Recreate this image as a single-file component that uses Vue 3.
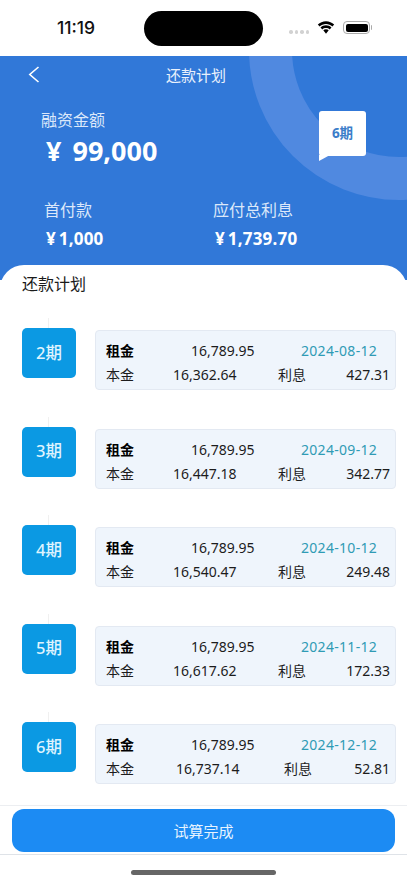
<script setup>
const rows = [
  { n: '2期', date: '2024-08-12', p: '16,362.64', i: '利息', v: '427.31' },
  { n: '3期', date: '2024-09-12', p: '16,447.18', i: '利息', v: '342.77' },
  { n: '4期', date: '2024-10-12', p: '16,540.47', i: '利息', v: '249.48' },
  { n: '5期', date: '2024-11-12', p: '16,617.62', i: '利息', v: '172.33' },
  { n: '6期', date: '2024-12-12', p: '16,737.14', i: '利息', v: '52.81', short: true }
]
</script>

<template>
  <div class="page">
    <div class="status">
      <span class="time">11:19</span>
      <div class="island"></div>
      <div class="status-right">
        <span class="dots"><i></i><i></i><i></i><i></i></span>
        <svg class="wifi" width="18" height="13" viewBox="0 0 18 13">
          <path d="M9 3c2.500 0 4.700 1 6.400 2.500l1.800-1.900C15.100 1.600 12.200.3 9 .3S2.900 1.600.8 3.600l1.800 1.900C4.300 4 6.500 3 9 3z" fill="#000"/>
          <path d="M9 7c1.400 0 2.700.5 3.700 1.400l1.800-1.900C13 5.100 11.100 4.300 9 4.300s-4 .8-5.500 2.200l1.800 1.900C6.300 7.500 7.600 7 9 7z" fill="#000"/>
          <path d="M9 8.300c-1.100 0-2 .4-2.700 1L9 12.700l2.700-3.400c-.7-.6-1.600-1-2.700-1z" fill="#000"/>
        </svg>
        <span class="battery"><b></b></span>
      </div>
    </div>

    <div class="hero">
      <div class="ring"></div>
      <div class="nav">
        <svg class="back" width="12" height="17" viewBox="0 0 12 17">
          <path d="M10.500 1 1.800 8.500l8.700 7.500" fill="none" stroke="#fff" stroke-width="1.600"/>
        </svg>
        <span class="nav-title">还款计划</span>
      </div>
      <div class="amount-block">
        <div class="amount-label">融资金额</div>
        <div class="amount">¥ 99,000</div>
      </div>
      <div class="tag">6期</div>
      <div class="stats">
        <div class="stat first">
          <div class="stat-label">首付款</div>
          <div class="stat-value">¥<span>1,000</span></div>
        </div>
        <div class="stat">
          <div class="stat-label">应付总利息</div>
          <div class="stat-value">¥<span>1,739.70</span></div>
        </div>
      </div>
    </div>

    <div class="sheet">
      <div class="sheet-title">还款计划</div>
      <div class="list">
        <div v-for="r in rows" :key="r.n" class="row">
          <div class="period">
            <span class="tick"></span>
            <div class="badge">{{ r.n }}</div>
          </div>
          <div class="card">
            <div class="line">
              <b class="k">租金</b>
              <span class="rent">16,789.95</span>
              <span class="date">{{ r.date }}</span>
            </div>
            <div class="line">
              <span class="k">本金</span>
              <span class="principal" :class="{ short: r.short }">{{ r.p }}</span>
              <span class="ik" :class="{ short: r.short }">{{ r.i }}</span>
              <span class="iv">{{ r.v }}</span>
            </div>
          </div>
        </div>
      </div>
    </div>

    <div class="footer">
      <button class="cta">试算完成</button>
    </div>
    <div class="home"><span></span></div>
  </div>
</template>

<style scoped>
.page {
  width: 407px;
  height: 883px;
  overflow: hidden;
  position: relative;
  background: #fff;
  display: flex;
  flex-direction: column;
  font-family: "Noto Sans", "Noto Sans CJK SC", sans-serif;
  color: #111;
}
.status {
  height: 56px;
  flex: none;
  display: flex;
  align-items: center;
  position: relative;
  background: #fff;
}
.time {
  margin-left: 57px;
  font: 500 17.500px Inter, sans-serif;
  color: #111;
  margin-top: -1px;
}
.island {
  position: absolute;
  left: 144px;
  top: 11px;
  width: 119px;
  height: 35px;
  border-radius: 18px;
  background: #000;
}
.status-right {
  position: absolute;
  left: 289px;
  top: 21px;
  display: flex;
  align-items: center;
}
.dots { display: flex; gap: 2px; margin-top: 9px; }
.dots i { width: 3.500px; height: 3.500px; border-radius: 50%; background: #d2d2d2; }
.wifi { margin-left: 8px; }
.battery {
  margin-left: 8px;
  width: 27px;
  height: 13px;
  border: 1px solid #aaa;
  border-radius: 4px;
  padding: 1.500px;
  box-sizing: border-box;
  display: flex;
  position: relative;
}
.battery::after {
  content: "";
  position: absolute;
  right: -3px;
  top: 3px;
  width: 1.500px;
  height: 5px;
  background: #aaa;
  border-radius: 0 1px 1px 0;
}
.battery b { flex: 1; background: #000; border-radius: 2px; }
.hero {
  height: 224px;
  flex: none;
  background: #3178d8;
  position: relative;
  overflow: hidden;
  color: #fff;
}
.ring {
  position: absolute;
  left: 249px;
  top: -156px;
  width: 300px;
  height: 300px;
  box-sizing: border-box;
  border: 43px solid #5089e0;
  border-radius: 50%;
}
.nav {
  height: 36px;
  margin-bottom: 2px;
  position: relative;
  display: flex;
  align-items: center;
}
.back { position: absolute; left: 28px; top: 10px; }
.nav-title { font-size: 15px; color: #e9f1fc; margin-left: 166px; }
.amount-block { position: relative; padding: 15px 0 0 41px; }
.amount-label { font-size: 16px; line-height: 22px; color: #dce8fa; }
.amount {
  font-size: 27px;
  font-weight: 700;
  line-height: 32px;
  margin: 4px 0 0 5px;
  word-spacing: 4px;
}
.tag {
  position: absolute;
  left: 319px;
  top: 55px;
  width: 47px;
  height: 45px;
  box-sizing: border-box;
  padding-bottom: 3px;
  background: #fff;
  border-radius: 3px;
  color: #3c7dc9;
  font-size: 13.500px;
  font-weight: 700;
  display: flex;
  align-items: center;
  justify-content: center;
}
.tag::after {
  content: "";
  position: absolute;
  left: 0;
  bottom: -5px;
  width: 0;
  height: 0;
  border-left: 11px solid #fff;
  border-bottom: 6px solid transparent;
}
.stats { display: flex; margin-top: 32px; padding-left: 44px; position: relative; }
.stat { width: 169px; }
.stat-label { font-size: 16px; line-height: 22px; color: #dce8fa; }
.stat-value { font-size: 17px; font-weight: 700; line-height: 20px; margin: 8px 0 0 2px; display: flex; align-items: center; }
.stat-value span { margin-left: 3px; letter-spacing: .2px; }
.sheet {
  flex: 1;
  min-height: 0;
  margin-top: -15px;
  background: #fff;
  border-radius: 24px 24px 0 0;
  position: relative;
  padding: 9px 11px 0 22px;
  border-bottom: 1px solid #eceef1;
}
.sheet-title { font-size: 16px; line-height: 20px; color: #1a1a1a; }
.list { margin-top: 36px; display: flex; flex-direction: column; gap: 38.500px; }
.row { display: flex; align-items: flex-start; }
.period { width: 73px; flex: none; position: relative; margin-top: -2px; }
.tick {
  position: absolute;
  left: 26px;
  top: -10px;
  height: 10px;
  width: 1px;
  background: #f0f0f0;
}
.badge {
  width: 54px;
  height: 50px;
  box-sizing: border-box;
  padding-bottom: 3px;
  background: #0b99e3;
  border-radius: 5px;
  color: #dff3fe;
  font-size: 16.500px;
  font-weight: 500;
  display: flex;
  align-items: center;
  justify-content: center;
}
.card {
  width: 301px;
  height: 60px;
  box-sizing: border-box;
  background: #eff5fc;
  border: 1px solid #e3e9f2;
  border-radius: 4px;
  padding: 8px 5px 0 10px;
  font-size: 14px;
  line-height: 24px;
}
.line { display: flex; height: 24px; white-space: nowrap; color: #1c1c1c; }
.k { width: 28px; flex: none; font-size: 14px; }
b.k { font-weight: 700; color: #000; }
.rent { margin-left: 57px; width: 65px; flex: none; }
.date { margin-left: 45px; color: #2f9bb5; letter-spacing: .3px; }
.principal { margin-left: 39px; width: 66px; flex: none; }
.principal.short { margin-left: 42px; }
.ik { margin-left: 39px; width: 28px; flex: none; }
.ik.short { margin-left: 42px; }
.iv { margin-left: auto; }
.footer {
  height: 49px;
  flex: none;
  box-sizing: border-box;
  padding: 3px 12px 2px;
  border-bottom: 1px solid #dfe3e8;
  background: #fff;
}
.cta {
  display: block;
  width: 383px;
  height: 43px;
  border: 0;
  border-radius: 12px;
  background: #1c8bf3;
  color: #e6f3ff;
  font-family: inherit;
  font-size: 15px;
  padding: 0;
}
.home { height: 28px; flex: none; position: relative; }
.home span {
  position: absolute;
  left: 131px;
  top: 15px;
  width: 145px;
  height: 5px;
  border-radius: 3px;
  background: #666;
}
</style>
